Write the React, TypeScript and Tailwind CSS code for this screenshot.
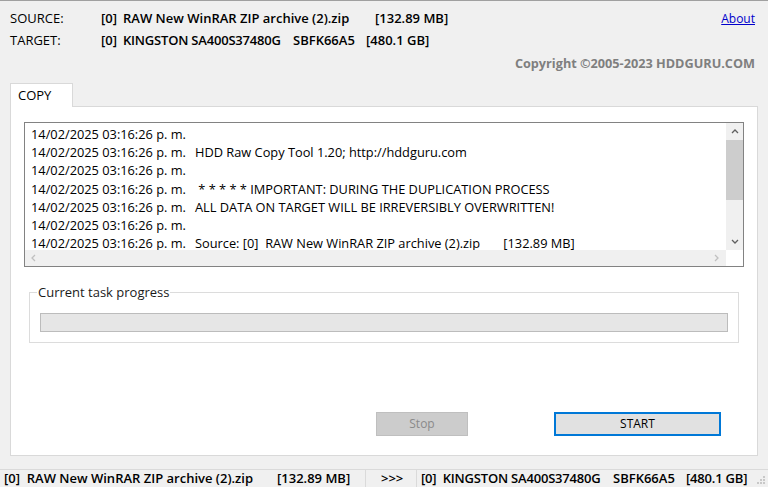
import React from "react";

const logLines: [string, string][] = [
  ["14/02/2025 03:16:26 p. m.", ""],
  ["14/02/2025 03:16:26 p. m.", "HDD Raw Copy Tool 1.20; http://hddguru.com"],
  ["14/02/2025 03:16:26 p. m.", ""],
  ["14/02/2025 03:16:26 p. m.", " * * * * * IMPORTANT: DURING THE DUPLICATION PROCESS"],
  ["14/02/2025 03:16:26 p. m.", "ALL DATA ON TARGET WILL BE IRREVERSIBLY OVERWRITTEN!"],
  ["14/02/2025 03:16:26 p. m.", ""],
  ["14/02/2025 03:16:26 p. m.", "Source: [0]  RAW New WinRAR ZIP archive (2).zip       [132.89 MB]"],
];

function Chevron({ dir, className }: { dir: "up" | "down" | "left" | "right"; className?: string }) {
  const paths: Record<string, string> = {
    up: "M1 5 L4 2 L7 5",
    down: "M1 2 L4 5 L7 2",
    left: "M5 1 L2 4 L5 7",
    right: "M2 1 L5 4 L2 7",
  };
  return (
    <svg width="8" height="8" viewBox="0 0 8 8" className={className}>
      <path d={paths[dir]} fill="none" stroke="currentColor" strokeWidth="1.3" />
    </svg>
  );
}

export default function App() {
  return (
    <div className="w-[768px] h-[487px] bg-[#f0f0f0] border-t border-[#a0a0a0] overflow-hidden flex flex-col font-['Open_Sans','Noto_Sans',sans-serif] text-[13px] text-black leading-none">
      {/* Header */}
      <div className="flex justify-between pl-[10px] pr-[13px] pt-[11px]">
        <div className="flex flex-col gap-[10px]">
          <div className="flex items-center h-[12px]">
            <span className="w-[91px]">SOURCE:</span>
            <span className="w-[22px] font-semibold">[0]</span>
            <span className="w-[252px] font-semibold whitespace-pre">RAW New WinRAR ZIP archive (2).zip</span>
            <span className="font-semibold">[132.89 MB]</span>
          </div>
          <div className="flex items-center h-[12px]">
            <span className="w-[91px]">TARGET:</span>
            <span className="w-[22px] font-semibold">[0]</span>
            <span className="w-[170px] font-semibold whitespace-pre tracking-[-0.2px]">KINGSTON SA400S37480G</span>
            <span className="w-[73px] font-semibold">SBFK66A5</span>
            <span className="font-semibold">[480.1 GB]</span>
          </div>
        </div>
        <div>
          <span className="text-[#0000cc] underline text-[12px]">About</span>
        </div>
      </div>
      <div className="flex justify-end pr-[13px] mt-[11px] h-[12px] items-center">
        <span className="font-bold text-[#7f7f7f] text-[12.7px]">Copyright ©2005-2023 HDDGURU.COM</span>
      </div>

      {/* Tab strip */}
      <div className="flex pl-[10px] mt-[14px] h-[24px]">
        <div className="w-[63px] h-[24px] bg-white border border-b-0 border-[#d9d9d9] flex items-center pl-[7px] relative z-10">
          COPY
        </div>
      </div>

      {/* Tab panel */}
      <div className="ml-[10px] w-[748px] h-[350px] -mt-px bg-white border border-[#d9d9d9] flex flex-col">
        {/* Log box */}
        <div className="ml-[13px] mt-[15px] w-[720px] h-[145px] border border-[#828282] flex flex-col">
          <div className="flex flex-1 overflow-hidden">
            <div className="flex-1 overflow-hidden pl-[6px] pt-[2px] text-[12.8px]">
              {logLines.map(([t, m], i) => (
                <div key={i} className="flex h-[18.2px] items-center leading-[18px] whitespace-pre">
                  <span className="w-[164px] shrink-0">{t}</span>
                  <span>{m}</span>
                </div>
              ))}
            </div>
            <div className="w-[17px] bg-[#f0f0f0] flex flex-col items-center text-[#606060]">
              <div className="h-[17px] flex items-center justify-center">
                <Chevron dir="up" />
              </div>
              <div className="w-[17px] h-[60px] bg-[#cdcdcd]" />
              <div className="flex-1" />
              <div className="h-[17px] flex items-center justify-center">
                <Chevron dir="down" />
              </div>
            </div>
          </div>
          <div className="h-[16px] bg-[#f0f0f0] flex items-center justify-between px-[5px] text-[#c0c0c0] mr-[17px]">
            <Chevron dir="left" />
            <Chevron dir="right" />
          </div>
        </div>

        {/* Group box */}
        <div className="ml-[18px] mt-[25px] w-[710px] h-[51px] border border-[#dcdcdc] relative">
          <span className="absolute left-[7px] -top-[9px] bg-white px-[1px] text-[#1a1a1a] leading-[16px]">
            Current task progress
          </span>
          <div className="ml-[10px] mt-[20px] w-[688px] h-[19px] bg-[#e6e6e6] border border-[#bcbcbc]" />
        </div>

        {/* Buttons */}
        <div className="flex mt-[69px] text-[12px]">
          <div className="ml-[365px] w-[92px] h-[24px] bg-[#cccccc] border border-[#bfbfbf] text-[#8a8a8a] flex items-center justify-center">
            Stop
          </div>
          <div className="ml-[86px] w-[167px] h-[24px] bg-[#e1e1e1] border-2 border-[#0078d7] flex items-center justify-center">
            START
          </div>
        </div>
      </div>

      {/* Status bar */}
      <div className="mt-[13px] flex-1 border-t border-[#dadada] flex items-center font-semibold relative">
        <span className="pl-[4px] w-[277px] whitespace-pre">[0]  RAW New WinRAR ZIP archive (2).zip</span>
        <span className="w-[88px]">[132.89 MB]</span>
        <div className="w-px h-full bg-[#dadada]" />
        <span className="w-[50px] pl-[15px]">&gt;&gt;&gt;</span>
        <div className="w-px h-full bg-[#dadada]" />
        <span className="pl-[4px] w-[196px] whitespace-pre tracking-[-0.2px]">[0]  KINGSTON SA400S37480G</span>
        <span className="w-[73px]">SBFK66A5</span>
        <span className="tracking-[-0.2px]">[480.1 GB]</span>
        <svg width="10" height="10" viewBox="0 0 10 10" className="absolute right-[2px] bottom-[2px]">
          <rect x="7" y="1" width="2" height="2" fill="#c8c8c8" />
          <rect x="4" y="4" width="2" height="2" fill="#c8c8c8" />
          <rect x="7" y="4" width="2" height="2" fill="#c8c8c8" />
          <rect x="1" y="7" width="2" height="2" fill="#c8c8c8" />
          <rect x="4" y="7" width="2" height="2" fill="#c8c8c8" />
          <rect x="7" y="7" width="2" height="2" fill="#c8c8c8" />
        </svg>
      </div>
    </div>
  );
}
